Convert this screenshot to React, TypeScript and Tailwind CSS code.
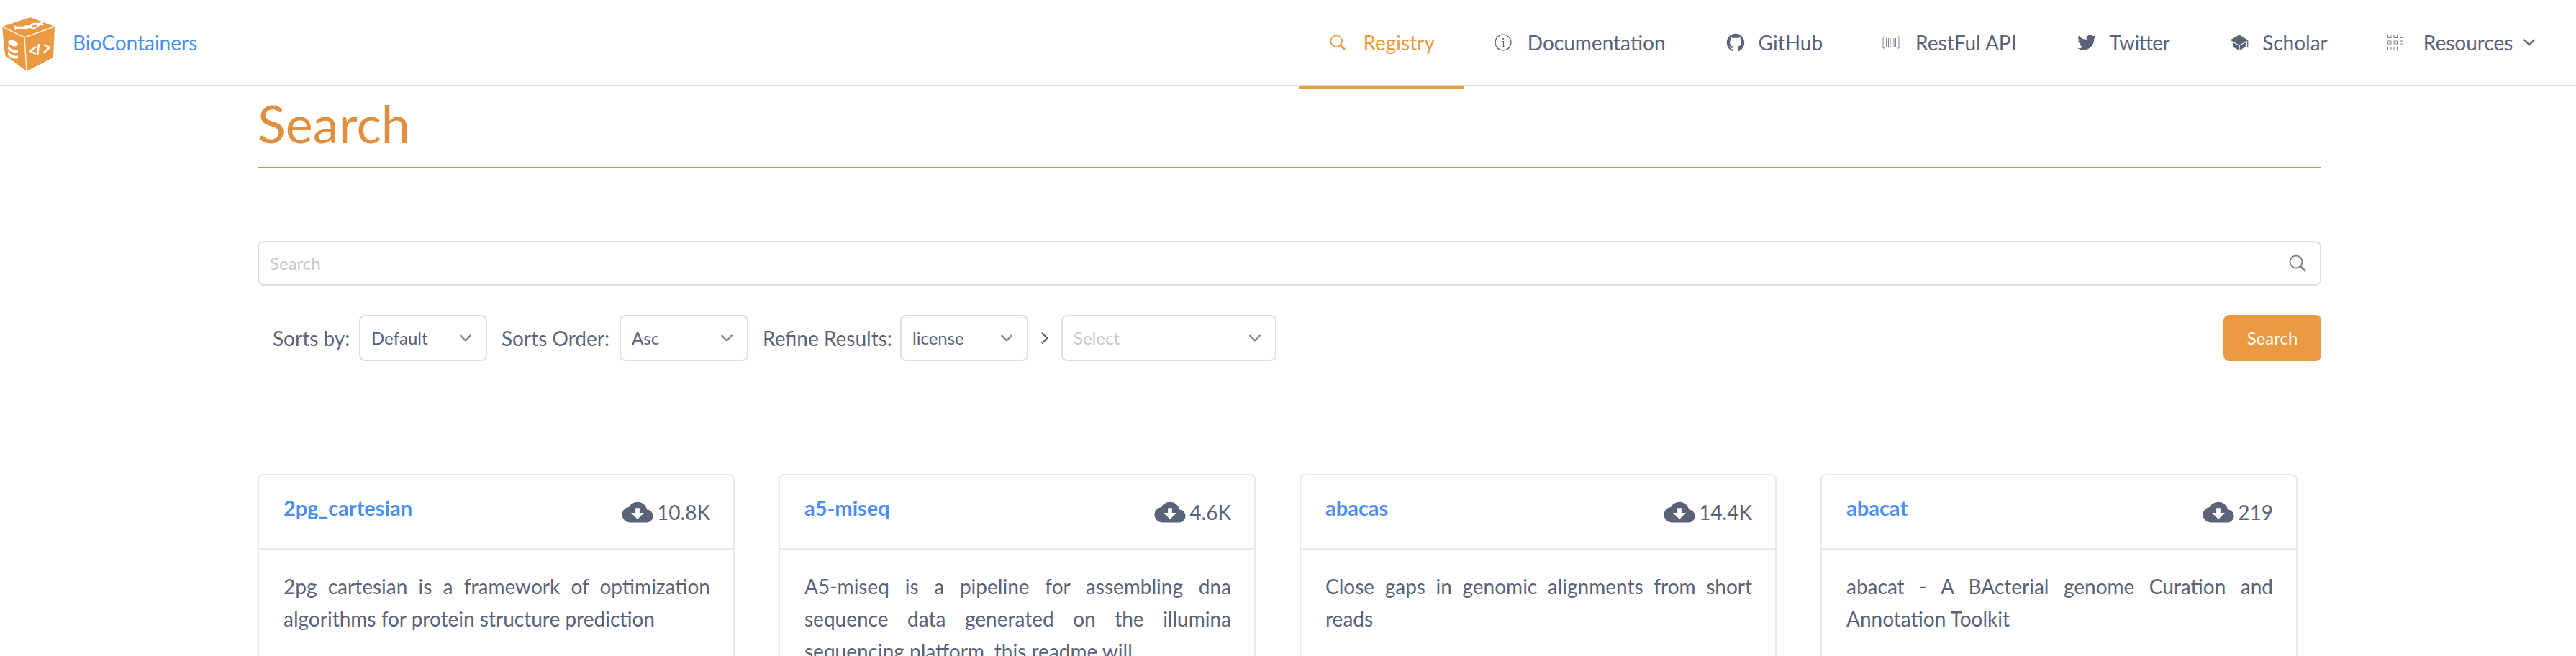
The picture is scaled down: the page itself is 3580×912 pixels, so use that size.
import type { ReactNode } from 'react'
import {
  IoIosArrowDown,
  IoIosArrowForward,
  IoIosSchool,
  IoLogoGithub,
  IoLogoTwitter,
  IoMdCloudDownload,
} from 'react-icons/io'

function SearchGlyph({ className }: { className: string }) {
  return (
    <svg viewBox="0 0 24 24" fill="none" stroke="currentColor" className={className}>
      <circle cx="10" cy="10" r="8.5" strokeWidth="2" />
      <path d="M16 16 L23 23" strokeWidth="3" />
    </svg>
  )
}

function InfoGlyph() {
  return (
    <svg viewBox="0 0 24 24" fill="none" stroke="currentColor" className="size-[24px]">
      <circle cx="12" cy="12" r="11" strokeWidth="1.2" />
      <path d="M10 10.5 H12.5 V18 M10 18 H15" strokeWidth="1.2" />
      <circle cx="12" cy="7" r="1.1" fill="currentColor" stroke="none" />
    </svg>
  )
}

function BarcodeGlyph() {
  return (
    <svg viewBox="0 0 24 20" fill="none" stroke="#808695" strokeWidth="1" className="h-[20px] w-[24px]">
      <path d="M3 2 H1 V18 H3 M21 2 H23 V18 H21" />
      <path d="M5.5 4 V16 M8.5 4 V16 M11 4 V16 M13.5 4 V16 M16 4 V16 M18.5 4 V16" />
    </svg>
  )
}

function KeypadGlyph() {
  const cells = [0, 8.5, 17]
  return (
    <svg viewBox="0 0 22 22" fill="none" stroke="#808695" strokeWidth="1" className="size-[22px]">
      {cells.map((y) =>
        cells.map((x) => <rect key={`${x}-${y}`} x={x + 0.5} y={y + 0.5} width="4.5" height="4" />),
      )}
    </svg>
  )
}

const navItems: { label: string; icon: ReactNode; active?: boolean; caret?: boolean; tight?: boolean }[] = [
  { label: 'Registry', icon: <SearchGlyph className="size-[22px]" />, active: true },
  { label: 'Documentation', icon: <InfoGlyph /> },
  { label: 'GitHub', icon: <IoLogoGithub className="size-[28px] shrink-0" /> },
  { label: 'RestFul API', icon: <BarcodeGlyph /> },
  { label: 'Twitter', icon: <IoLogoTwitter className="size-[28px] shrink-0" />, tight: true },
  { label: 'Scholar', icon: <IoIosSchool className="size-[28px] shrink-0" /> },
  { label: 'Resources', icon: <KeypadGlyph />, caret: true },
]

const cards = [
  {
    name: '2pg_cartesian',
    count: '10.8K',
    text: '2pg cartesian is a framework of optimization algorithms for protein structure prediction',
  },
  {
    name: 'a5-miseq',
    count: '4.6K',
    text: 'A5-miseq is a pipeline for assembling dna sequence data generated on the illumina sequencing platform. this readme will ...',
  },
  {
    name: 'abacas',
    count: '14.4K',
    text: 'Close gaps in genomic alignments from short reads',
  },
  {
    name: 'abacat',
    count: '219',
    text: 'abacat - A BActerial genome Curation and Annotation Toolkit',
  },
]

function Logo() {
  return (
    <svg viewBox="0 0 80 118" className="h-[118px] w-[80px] shrink-0">
      <path d="M42 24 L76 37 L74 80 L37 99 L7 77 L3 37 Z" fill="#e99a42" />
      <path d="M3 37 L34 52 L76 37 M34 52 L37 99" fill="none" stroke="#fdf3e6" strokeWidth="1.5" />
      {/* dna */}
      <path d="M20 41 C28 33 34 44 42 36 C48 30 54 37 60 30" fill="none" stroke="#fff" strokeWidth="3" />
      <path d="M20 36 C28 44 36 31 44 39 C50 43 54 30 60 35" fill="none" stroke="#fff" strokeWidth="2" />
      {/* database */}
      <ellipse cx="18" cy="60" rx="7" ry="4" fill="#fff" transform="rotate(18 18 60)" />
      <path d="M11 63 C13 68 22 71 25 69 L25 73 C22 75 13 72 11 68 Z" fill="#fff" />
      <path d="M11 71 C13 76 22 79 25 77 L25 81 C22 83 13 80 11 76 Z" fill="#fff" />
      {/* code mark */}
      <path d="M50 65 L42 71 L50 75 M54 61 L52 77 M61 62 L69 66 L61 73" fill="none" stroke="#fff" strokeWidth="2.5" />
    </svg>
  )
}

function Select({ value, width, placeholder }: { value: string; width: string; placeholder?: boolean }) {
  return (
    <div className={`flex h-[64px] shrink-0 items-center justify-between rounded-[8px] border-2 border-[#dcdee2] bg-white pl-[15px] pr-[16px] ${width}`}>
      <span className={`text-[24px] ${placeholder ? 'text-[#c5c8ce]' : 'text-[#5a6377]'}`}>{value}</span>
      <IoIosArrowDown className="size-[24px] text-[#808695]" />
    </div>
  )
}

export default function App() {
  return (
    <div className="h-[912px] w-[3580px] overflow-hidden bg-white font-['Lato',sans-serif] font-normal text-[#5a6377]">
      <header className="flex h-[120px] items-center justify-between border-b-2 border-[#dcdee2]">
        <div className="flex items-center gap-[21px]">
          <Logo />
          <span className="text-[28px] text-[#4a8ff0]">BioContainers</span>
        </div>
        <nav className="flex h-full pr-[12px]">
          {navItems.map((item) => (
            <a
              key={item.label}
              className={`relative flex items-center gap-[22px] px-[41.5px] text-[28px] ${item.active ? 'text-[#e99a42]' : ''}`}
            >
              <span className={`flex items-center ${item.caret ? 'w-[28px]' : 'w-[24px]'}`}>{item.icon}</span>
              <span className={item.tight ? 'tracking-[-0.6px]' : ''}>{item.label}</span>
              {item.caret && <IoIosArrowDown className="-ml-[12px] size-[24px]" />}
              {item.active && <span className="absolute -left-[2px] right-[1px] -bottom-[6px] h-[4px] bg-[#e99a42]" />}
            </a>
          ))}
        </nav>
      </header>

      <main className="ml-[358px] w-[2868px]">
        <h1 className="h-[114px] border-b-2 border-[#e08f3f] pt-[6px] text-[72px] leading-[90px] text-[#e08f3f]">Search</h1>

        <div className="mt-[101px] flex h-[62px] items-center justify-between rounded-[8px] border-2 border-[#dcdee2] pl-[15px] pr-[19px]">
          <span className="text-[24px] text-[#c5c8ce]">Search</span>
          <SearchGlyph className="size-[24px] text-[#808695]" />
        </div>

        <div className="mt-[41px] flex items-center justify-between">
          <div className="flex items-center pl-[21px] text-[28px]">
            <span className="w-[120px]">Sorts by:</span>
            <Select value="Default" width="w-[178px]" />
            <span className="ml-[20px] w-[164px]">Sorts Order:</span>
            <Select value="Asc" width="w-[179px]" />
            <span className="ml-[20px] w-[191px]">Refine Results:</span>
            <Select value="license" width="w-[178px]" />
            <IoIosArrowForward className="mx-[11px] size-[24px]" />
            <Select value="Select" width="w-[299px]" placeholder />
          </div>
          <button className="h-[64px] w-[136px] rounded-[8px] bg-[#e99a42] text-[24px] text-white">Search</button>
        </div>

        <div className="mt-[157px] grid w-[2835px] grid-cols-4 gap-x-[61px]">
          {cards.map((card) => (
            <div key={card.name} className="h-[400px] rounded-[8px] border-2 border-[#e8eaec]">
              <div className="flex h-[103px] items-start justify-between border-b-2 border-[#e8eaec] pl-[34px] pr-[32px] pt-[24px]">
                <span className="text-[29px] font-bold leading-[42px] text-[#4a8ff0]">{card.name}</span>
                <span className="flex items-center gap-[4px] pt-[4px] text-[28px] leading-[42px]">
                  <IoMdCloudDownload className="size-[46px]" />
                  {card.count}
                </span>
              </div>
              <p className="pl-[34px] pr-[32px] pt-[29px] text-justify text-[28px] leading-[45px]">{card.text}</p>
            </div>
          ))}
        </div>
      </main>
    </div>
  )
}
